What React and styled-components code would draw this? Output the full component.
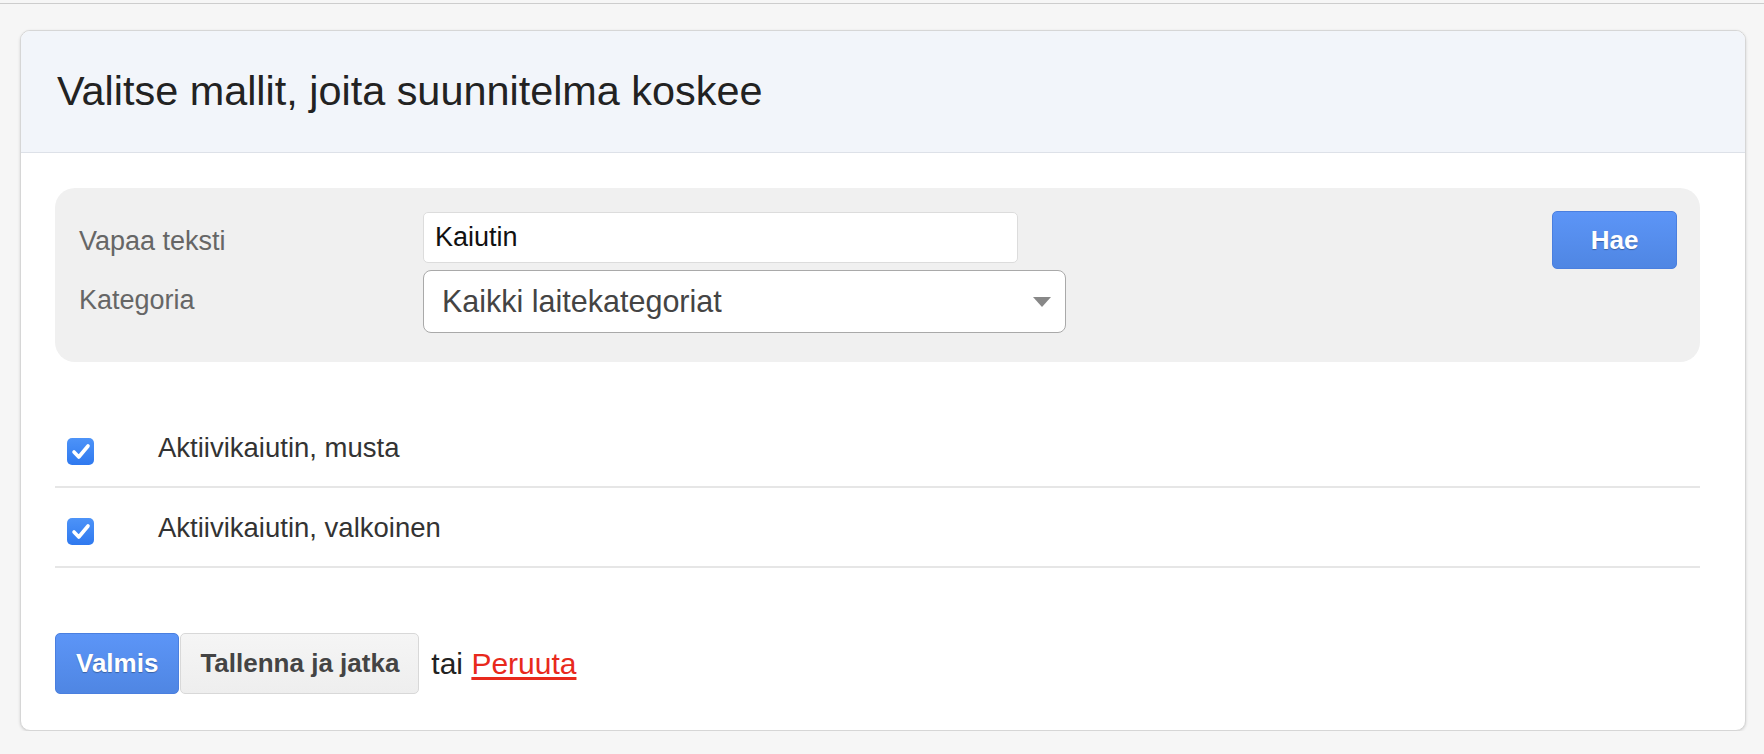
import React from 'react';
import styled, { createGlobalStyle } from 'styled-components';

const GlobalStyle = createGlobalStyle`
    html, body {
        margin: 0;
        padding: 0;
        background-color: #f6f6f6;
        font-family: "Liberation Sans", Arial, Helvetica, sans-serif;
    }
    * {
        box-sizing: border-box;
    }
`

const TopRule = styled.div`
    height: 1px;
    margin-top: 3px;
    background-color: #cdcdcd;
`

const Card = styled.div`
    margin: 26px 18px 0 20px;
    background-color: white;
    border: 1px solid #d6d6d6;
    border-radius: 10px;
    box-shadow: 0 1px 3px rgba(0, 0, 0, 0.15);
    overflow: hidden;
`

const CardHeader = styled.div`
    background-color: #f2f5fa;
    border-bottom: 1px solid #dde1e8;
    padding: 36px 36px 37px;
`

const Title = styled.h1`
    margin: 0;
    font-size: 41.4px;
    line-height: 48px;
    font-weight: 400;
    color: #222;
`

const CardBody = styled.div`
    padding: 35px 45px 36px 34px;
`

const SearchPanel = styled.div`
    display: flex;
    justify-content: space-between;
    align-items: flex-start;
    background-color: #f0f0f0;
    border-radius: 20px;
    padding: 24px 23px 29px 24px;
`

const FormColumn = styled.div`
    display: flex;
    flex-direction: column;
    gap: 7px;
`

const FormRow = styled.div`
    display: flex;
    align-items: flex-start;
`

const Label = styled.div`
    width: 344px;
    padding-top: ${p => p.offset}px;
    font-size: 27px;
    line-height: 30px;
    color: #666;
`

const TextInput = styled.input`
    width: 595px;
    height: 51px;
    padding: 0 11px;
    margin: 0;
    border: 1.5px solid #dcdcdc;
    border-radius: 5px;
    background-color: white;
    font-family: inherit;
    font-size: 27px;
    color: #111;
    outline: none;
`

const SelectBox = styled.div`
    position: relative;
    width: 643px;
    height: 63px;
    border: 1.5px solid #a9a9a9;
    border-radius: 8px;
    background-color: white;
    display: flex;
    align-items: center;
    padding-left: 18px;
    font-size: 30.5px;
    color: #444;
`

const Arrow = styled.span`
    position: absolute;
    right: 14px;
    top: 26px;
    width: 0;
    height: 0;
    border-left: 9px solid transparent;
    border-right: 9px solid transparent;
    border-top: 10px solid #888;
`

const Button = styled.button`
    height: ${p => p.tall}px;
    padding: 0 ${p => p.pad}px;
    margin: 0;
    border-radius: 5px;
    font-family: inherit;
    font-size: 26px;
    font-weight: 700;
    cursor: pointer;
    border: 1.5px solid ${p => p.primary ? '#4a7fdf' : '#d8d8d8'};
    background: ${p => p.primary
        ? 'linear-gradient(#5c95f7, #4f86e3)'
        : 'linear-gradient(#f5f5f5, #eeeeee)'};
    color: ${p => p.primary ? 'white' : '#444'};
    text-shadow: ${p => p.primary ? '0 1px 1px rgba(0, 0, 0, 0.3)' : 'none'};
`

const SearchButton = styled(Button)`
    width: 125px;
    margin-top: -1px;
`

const ItemList = styled.div`
    margin-top: 46px;
`

const ItemRow = styled.div`
    display: flex;
    align-items: flex-start;
    height: 80px;
    border-bottom: 2px solid #e6e6e6;
`

const CheckBox = styled.span`
    display: flex;
    align-items: center;
    justify-content: center;
    width: 27px;
    height: 27px;
    margin: 30px 0 0 12px;
    border-radius: 5px;
    background: linear-gradient(#4d93f8, #2f79ef);
`

const ItemText = styled.span`
    margin-left: 64px;
    padding-top: 25px;
    font-size: 27.5px;
    line-height: 30px;
    color: #333;
`

const Footer = styled.div`
    display: flex;
    align-items: center;
    gap: 1px;
    margin-top: 65px;
`

const OrText = styled.span`
    margin-left: 11px;
    font-size: 30px;
    color: #222;
`

const CancelLink = styled.a`
    color: #e8291c;
    text-decoration: underline;
    text-underline-offset: 3px;
    cursor: pointer;
`

const Check = () => (
    <svg width="20" height="17" viewBox="0 0 20 17">
        <path d="M3 9 L7.8 14 L17 3" fill="none" stroke="white" strokeWidth="3.6" strokeLinecap="round" strokeLinejoin="round" />
    </svg>
)

const items = ['Aktiivikaiutin, musta', 'Aktiivikaiutin, valkoinen']

const App = () => {
    return (
        <>
            <GlobalStyle />
            <TopRule />
            <Card>
                <CardHeader>
                    <Title>Valitse mallit, joita suunnitelma koskee</Title>
                </CardHeader>
                <CardBody>
                    <SearchPanel>
                        <FormColumn>
                            <FormRow>
                                <Label offset={14}>Vapaa teksti</Label>
                                <TextInput defaultValue="Kaiutin" />
                            </FormRow>
                            <FormRow>
                                <Label offset={15}>Kategoria</Label>
                                <SelectBox>
                                    Kaikki laitekategoriat
                                    <Arrow />
                                </SelectBox>
                            </FormRow>
                        </FormColumn>
                        <SearchButton primary tall={58} pad={0}>Hae</SearchButton>
                    </SearchPanel>

                    <ItemList>
                        {items.map(name => (
                            <ItemRow key={name}>
                                <CheckBox><Check /></CheckBox>
                                <ItemText>{name}</ItemText>
                            </ItemRow>
                        ))}
                    </ItemList>

                    <Footer>
                        <Button primary tall={61} pad={20}>Valmis</Button>
                        <Button tall={61} pad={19}>Tallenna ja jatka</Button>
                        <OrText>tai <CancelLink>Peruuta</CancelLink></OrText>
                    </Footer>
                </CardBody>
            </Card>
        </>
    )
}

export default App
